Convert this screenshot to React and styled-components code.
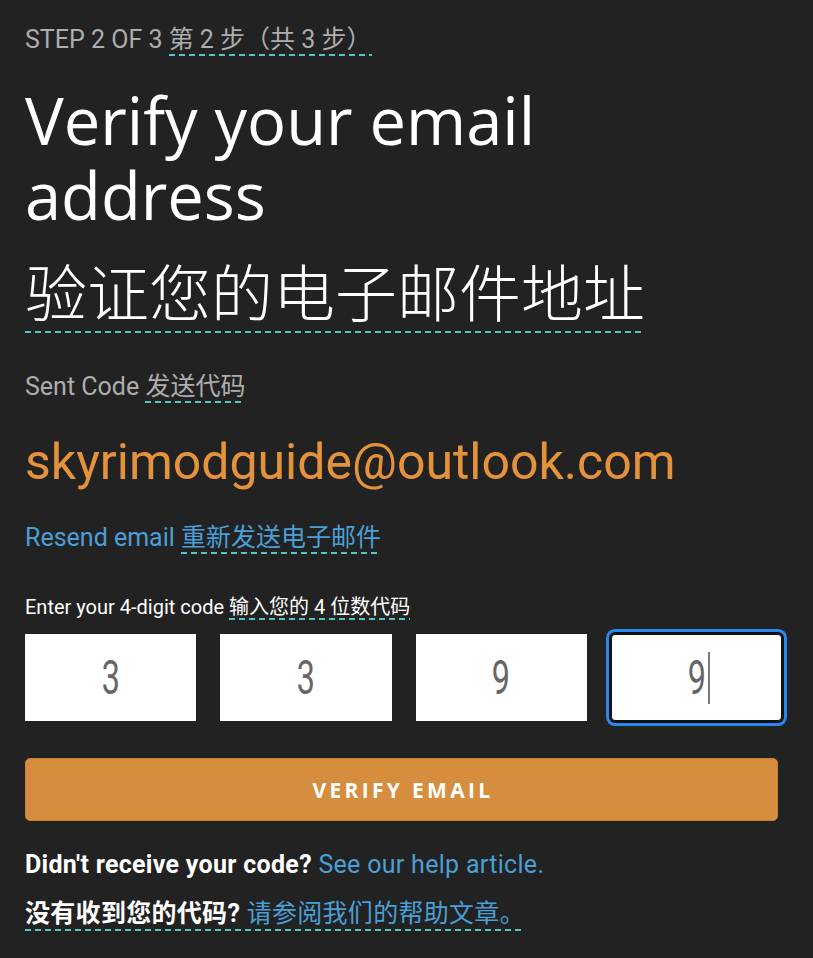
import React from 'react';
import styled, { createGlobalStyle } from 'styled-components';

const GlobalStyle = createGlobalStyle`
  html, body {
    margin: 0;
    padding: 0;
    background: #222222;
  }
  body {
    font-family: Roboto, "Noto Sans CJK SC", sans-serif;
    color: #ffffff;
  }
`;

const Page = styled.main`
  width: 813px;
  min-height: 958px;
  box-sizing: border-box;
  padding: 25px 31px 0 25px;
`;

// dashed teal underline used on the translated fragments
const Dotted = styled.span`
  padding-bottom: ${(p) => p.$pad || 0}px;
  background-image: linear-gradient(to right, #4ec9c2 60%, transparent 60%);
  background-size: 10px 2px;
  background-repeat: repeat-x;
  background-position: 0 calc(100% - ${(p) => p.$lift || 0}px);
`;

const StepLabel = styled.div`
  font-size: 25px;
  line-height: 30px;
  color: #adadad;
  text-transform: uppercase;
`;

const Heading = styled.h1`
  margin: 28px 0 0;
  font-family: "Open Sans", sans-serif;
  font-weight: 400;
  font-size: 65px;
  line-height: 75px;
  color: #ffffff;
`;

const HeadingZh = styled.div`
  margin-top: 25px;
  font-family: "Noto Sans CJK SC", sans-serif;
  font-weight: 300;
  font-size: 62px;
  line-height: 64px;
  color: #ffffff;
`;

const Label = styled.div`
  margin-top: ${(p) => p.$top || 0}px;
  font-size: ${(p) => p.$size || 25}px;
  line-height: ${(p) => p.$lh || 30}px;
  color: ${(p) => p.$color || '#adadad'};
`;

const Email = styled.div`
  margin-top: 32px;
  font-size: 50px;
  line-height: 56px;
  color: #e4923c;
`;

const CodeRow = styled.div`
  margin-top: 15px;
  display: grid;
  grid-template-columns: repeat(4, 1fr);
  gap: 24px;
  width: 757px;
`;

const CodeBox = styled.div`
  height: 87px;
  box-sizing: border-box;
  background: #ffffff;
  display: flex;
  align-items: center;
  justify-content: center;
  border-radius: ${(p) => (p.$active ? 4 : 0)}px;
  border: ${(p) => (p.$active ? '1px solid #111111' : '0')};
  box-shadow: ${(p) => (p.$active ? '0 0 0 2px #111111, 0 0 0 5px #2a86f0' : 'none')};
`;

const Digit = styled.span`
  display: inline-block;
  font-family: Roboto, sans-serif;
  font-weight: 400;
  font-size: 49px;
  color: #666666;
  transform: scaleX(0.66);
`;

const Caret = styled.span`
  display: inline-block;
  width: 2px;
  height: 52px;
  margin-left: -3px;
  background: #7a7a7a;
`;

const Button = styled.button`
  margin-top: 37px;
  width: 753px;
  height: 63px;
  padding: 0 0 0 3px;
  border: 1px solid #c77f33;
  border-radius: 5px;
  background: #d68d3e;
  color: #ffffff;
  font-family: "Open Sans", sans-serif;
  font-weight: 700;
  font-size: 21px;
  letter-spacing: 3.3px;
  text-transform: uppercase;
  cursor: pointer;
`;

const HelpLine = styled.div`
  margin-top: ${(p) => p.$top || 0}px;
  font-size: 25px;
  line-height: 30px;
  letter-spacing: 0.3px;
`;

const Strong = styled.span`
  font-weight: 700;
  color: #ffffff;
`;

const Link = styled.a`
  color: #4a9fd6;
  text-decoration: none;
`;

const digits = ['3', '3', '9', '9'];

export default function App() {
  return (
    <>
      <GlobalStyle />
      <Page>
        <StepLabel>
          Step 2 of 3 <Dotted $pad={2}>第 2 步（共 3 步）</Dotted>
        </StepLabel>
        <Heading>Verify your email address</Heading>
        <HeadingZh>
          <Dotted $lift={2}>验证您的电子邮件地址</Dotted>
        </HeadingZh>
        <Label $top={50}>
          Sent Code <Dotted $pad={2}>发送代码</Dotted>
        </Label>
        <Email>skyrimodguide@outlook.com</Email>
        <Label $top={33} $color="#4a9fd6">
          Resend email <Dotted $pad={2}>重新发送电子邮件</Dotted>
        </Label>
        <Label $top={42} $size={20} $lh={24} $color="#ffffff">
          Enter your 4-digit code <Dotted $pad={1}>输入您的 4 位数代码</Dotted>
        </Label>
        <CodeRow>
          {digits.map((d, i) => (
            <CodeBox key={i} $active={i === 3}>
              <Digit>{d}</Digit>
              {i === 3 && <Caret />}
            </CodeBox>
          ))}
        </CodeRow>
        <Button type="button">Verify Email</Button>
        <HelpLine $top={29}>
          <Strong>Didn't receive your code?</Strong> <Link href="#">See our help article.</Link>
        </HelpLine>
        <HelpLine $top={19}>
          <Dotted $pad={3}>
            <Strong>没有收到您的代码?</Strong> <Link href="#">请参阅我们的帮助文章。</Link>
          </Dotted>
        </HelpLine>
      </Page>
    </>
  );
}
